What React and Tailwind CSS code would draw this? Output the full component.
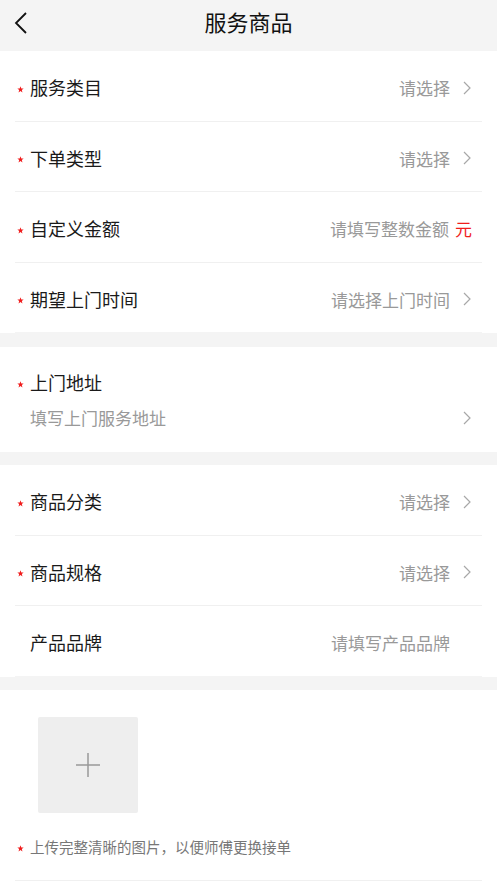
import React from "react";

const font = { fontFamily: '"Noto Sans CJK SC", "Noto Sans", sans-serif' };

function Chevron() {
  return (
    <svg width="10" height="16" viewBox="0 0 10 16" className="ml-[12px]">
      <path d="M2 2 L8 8 L2 14" fill="none" stroke="#a8a8a8" strokeWidth="1.2" />
    </svg>
  );
}

function Star() {
  return (
    <span className="w-[15px] flex items-center pl-[2px] pt-[3px]">
      <svg width="7" height="7" viewBox="0 0 10 10">
        <path d="M5 0.5 L6.2 3.6 L9.5 3.7 L6.9 5.8 L7.8 9.2 L5 7.3 L2.2 9.2 L3.1 5.8 L0.5 3.7 L3.8 3.6 Z" fill="#f01d1d" />
      </svg>
    </span>
  );
}

function Row({ label, value, required = true, arrow = true, suffix, last }) {
  return (
    <div className="px-[15px]">
      <div className={`h-[70.5px] pt-[4px] flex items-center ${last ? "border-b border-[#f4f4f4]" : "border-b border-[#f0f0f0]"}`}>
        {required ? <Star /> : <span className="w-[15px]" />}
        <span className="text-[18px] text-[#1a1a1a] flex-1">{label}</span>
        <span className="text-[17px] text-[#999]">{value}</span>
        {suffix && <span className="text-[17px] text-[#f01d1d] ml-[6px] mr-[10px]">{suffix}</span>}
        {arrow && <span className="mr-[10px] flex items-center"><Chevron /></span>}
        {!arrow && !suffix && <span className="w-[32px]" />}
      </div>
    </div>
  );
}

export default function App() {
  return (
    <div style={font} className="w-[497px] min-h-[883px] bg-[#f4f4f4] overflow-hidden">
      <div className="h-[51px] bg-[#f4f4f4] flex items-center relative">
        <svg width="16" height="24" viewBox="0 0 16 24" className="ml-[13px] -mt-[6px]">
          <path d="M13 2 L3 12 L13 22" fill="none" stroke="#111" strokeWidth="1.8" />
        </svg>
        <div className="absolute inset-0 flex items-center justify-center text-[22px] text-[#111] pb-[8px]">服务商品</div>
      </div>

      <div className="bg-white">
        <Row label="服务类目" value="请选择" />
        <Row label="下单类型" value="请选择" />
        <Row label="自定义金额" value="请填写整数金额" arrow={false} suffix="元" />
        <Row label="期望上门时间" value="请选择上门时间" last />
      </div>

      <div className="h-[14px]" />

      <div className="bg-white h-[105px] px-[15px] pt-[22px]">
        <div className="flex items-center">
          <Star />
          <span className="text-[18px] text-[#1a1a1a]">上门地址</span>
        </div>
        <div className="flex items-center mt-[9px]">
          <span className="w-[15px]" />
          <span className="text-[17px] text-[#999] flex-1">填写上门服务地址</span>
          <span className="mr-[10px] flex items-center"><Chevron /></span>
        </div>
      </div>

      <div className="h-[13px]" />

      <div className="bg-white">
        <Row label="商品分类" value="请选择" />
        <Row label="商品规格" value="请选择" />
        <Row label="产品品牌" value="请填写产品品牌" required={false} arrow={false} last />
      </div>

      <div className="h-[13px]" />

      <div className="bg-white px-[15px] pt-[27px] pb-[10px]">
        <div className="ml-[23px] w-[100px] h-[96px] bg-[#eeeeee] rounded-[2px] flex items-center justify-center">
          <svg width="26" height="26" viewBox="0 0 26 26">
            <path d="M13 1 V25 M1 13 H25" stroke="#999" strokeWidth="1.5" />
          </svg>
        </div>
        <div className="flex items-center mt-[24px] h-[20px]">
          <Star />
          <span className="text-[14.5px] text-[#777]">上传完整清晰的图片，以便师傅更换接单</span>
        </div>
        <div className="mt-[23px] border-b border-[#f0f0f0]" />
        <div className="h-[20px]" />
      </div>
    </div>
  );
}
